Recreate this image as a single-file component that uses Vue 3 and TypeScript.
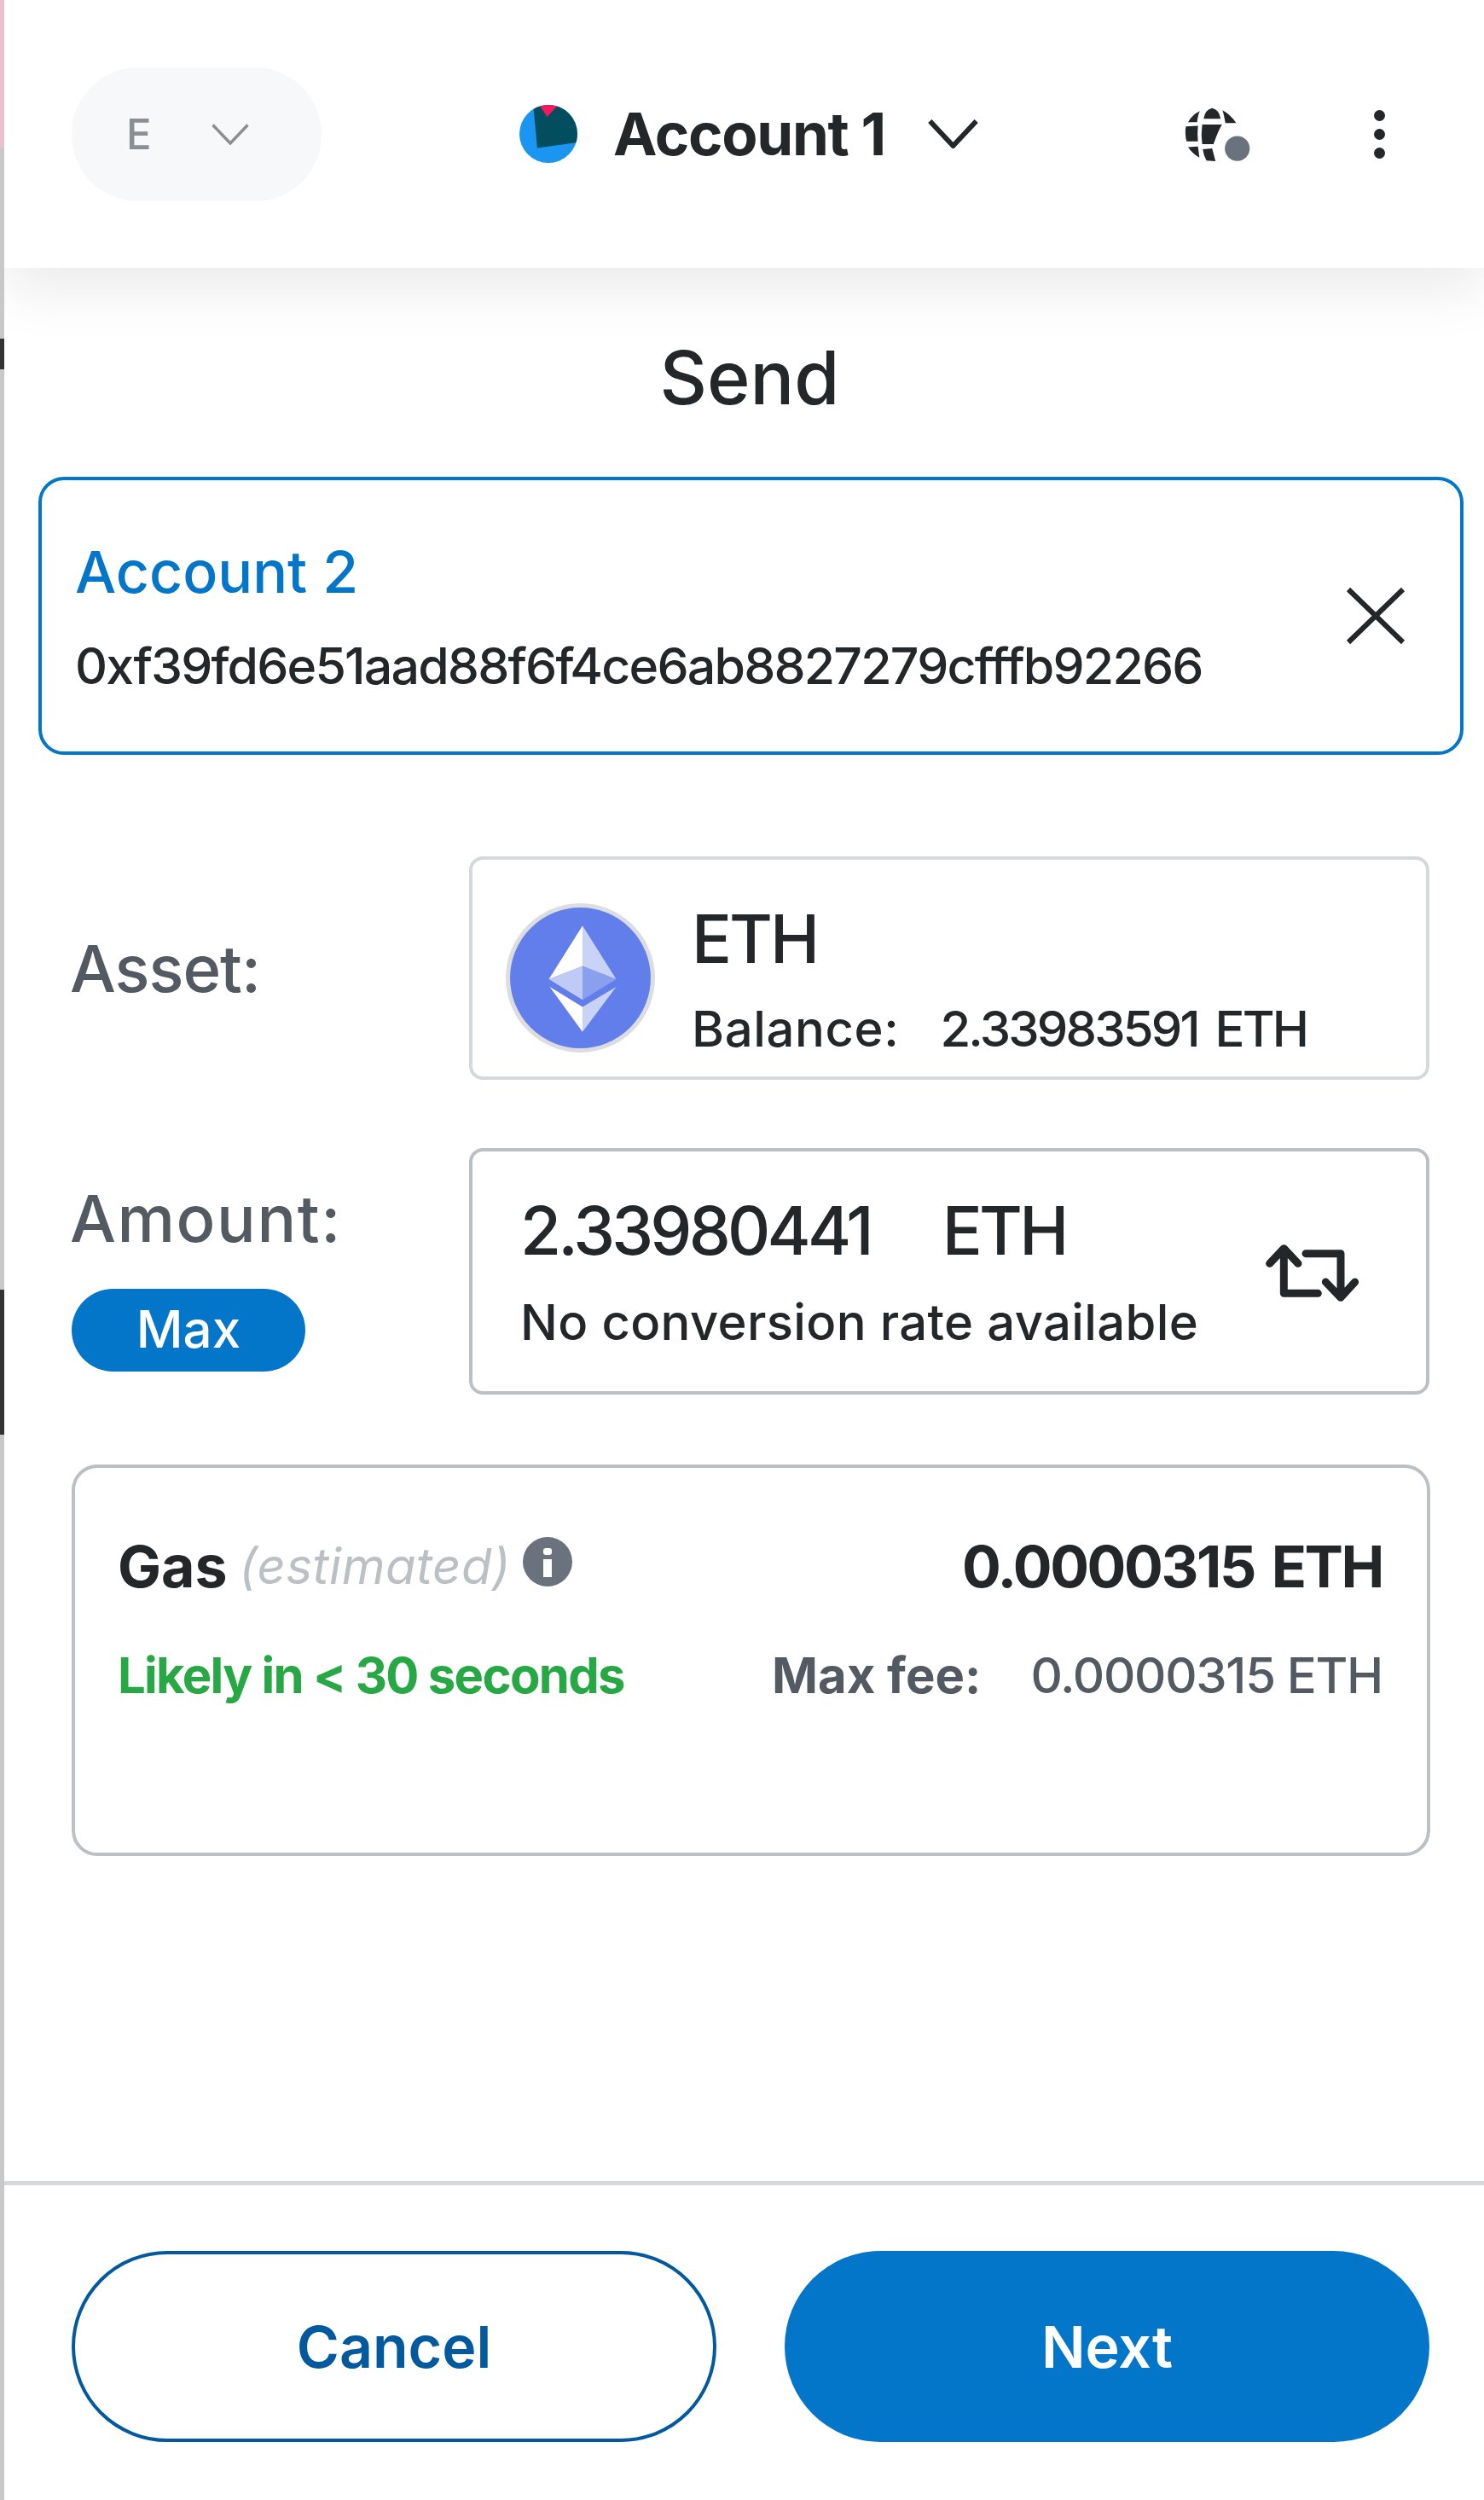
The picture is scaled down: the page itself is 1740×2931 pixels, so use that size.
<script setup lang="ts">
const address = '0xf39fd6e51aad88f6f4ce6ab8827279cfffb92266'
const balance = '2.33983591 ETH'
const gasFee = '0.0000315 ETH'
</script>

<template>
  <div class="page">
    <div class="edge">
      <div class="edge-pink"></div>
      <div class="edge-gray" style="height: 224px"></div>
      <div class="edge-dark" style="height: 36px"></div>
      <div class="edge-gray" style="height: 1079px"></div>
      <div class="edge-dark" style="height: 170px"></div>
      <div class="edge-gray grow"></div>
    </div>

    <main class="main">
      <header class="header">
        <div class="network">
          <span class="network-letter">E</span>
          <svg class="network-chevron" viewBox="0 0 44 25" fill="none">
            <path d="M1.5 1.5 22 23 42.5 1.5" stroke="#8a8f94" stroke-width="3.5" />
          </svg>
        </div>

        <svg class="avatar" viewBox="85 68 205 205">
          <defs>
            <clipPath id="avatar-clip"><circle cx="187.5" cy="170.5" r="102.5" /></clipPath>
          </defs>
          <g clip-path="url(#avatar-clip)">
            <rect x="85" y="68" width="205" height="205" fill="#1a95f0" />
            <polygon points="133,60 148,220 295,200 295,60" fill="#024e5f" />
            <polygon points="150,60 230,60 183,110" fill="#f5185e" />
          </g>
        </svg>
        <span class="account-name">Account 1</span>
        <svg class="account-chevron" viewBox="0 0 60 35" fill="none">
          <path d="M2 2 30 32 58 2" stroke="#24272a" stroke-width="6" stroke-linejoin="round" />
        </svg>

        <svg class="globe" viewBox="85 52 235 196" fill="#24272a">
          <path d="M155 95Q160 62 185 57 210 62 215 95Z" />
          <path d="M100 107Q115 80 142 68 135 80 132 107Z" />
          <path d="M222 65Q250 80 270 110L232 110Q228 85 222 65Z" />
          <path d="M92 122 135 120Q132 150 135 175L95 175Q88 150 92 122Z" />
          <path d="M150 115 220 115Q205 140 190 185L150 185Q145 150 150 115Z" />
          <path d="M100 195 135 193Q138 215 140 232 115 218 100 195Z" />
          <path d="M152 203 185 200Q192 225 197 245L165 243Q155 225 152 203Z" />
          <circle cx="274" cy="200" r="44" fill="#6a737d" />
        </svg>

        <div class="menu-dots">
          <span></span>
          <span></span>
          <span></span>
        </div>
      </header>

      <h1 class="title">Send</h1>

      <section class="recipient">
        <div>
          <div class="recipient-name">Account 2</div>
          <div class="recipient-address">{{ address }}</div>
        </div>
        <svg class="close-icon" viewBox="0 0 70 68" fill="none">
          <path d="M3 3 67 65M67 3 3 65" stroke="#24272a" stroke-width="6" />
        </svg>
      </section>

      <section class="form-row asset-row">
        <div class="label label-asset">Asset:</div>
        <div class="field asset-field">
          <svg class="eth-logo" viewBox="0 0 173 173">
            <circle cx="86.5" cy="86.5" r="84" fill="#627eea" stroke="#dcdde0" stroke-width="5" />
            <polygon points="89,26 50,88 89,73" fill="#ffffff" />
            <polygon points="89,26 128,88 89,73" fill="#c9d3f6" />
            <polygon points="89,73 50,88 89,112" fill="#c0cbf5" />
            <polygon points="89,73 128,88 89,112" fill="#8aa0ee" />
            <polygon points="51,97 89,120 89,149" fill="#ffffff" />
            <polygon points="128,97 89,120 89,149" fill="#c9d3f6" />
          </svg>
          <div class="asset-info">
            <div class="asset-symbol">ETH</div>
            <div class="asset-balance">
              <span class="balance-label">Balance:</span>
              <span class="balance-value">{{ balance }}</span>
            </div>
          </div>
        </div>
      </section>

      <section class="form-row amount-row">
        <div class="amount-label">
          <div class="label label-amount">Amount:</div>
          <button class="max-button">Max</button>
        </div>
        <div class="field amount-field">
          <div>
            <div class="amount-value">
              <span>2.33980441</span>
              <span>ETH</span>
            </div>
            <div class="amount-note">No conversion rate available</div>
          </div>
          <svg class="swap-icon" viewBox="65 102 345 210" fill="none">
            <path
              d="M88 175 138 122 188 175M138 122V280H258M215 140H338V295M285 240 338 295 388 240"
              stroke="#24272a"
              stroke-width="27"
              stroke-linecap="round"
              stroke-linejoin="round"
            />
          </svg>
        </div>
      </section>

      <section class="gas">
        <div class="gas-line gas-top">
          <div class="gas-title">
            <b>Gas</b>
            <i>(estimated)</i>
            <svg class="info-icon" viewBox="0 0 58 58">
              <circle cx="29" cy="29" r="29" fill="#6a737d" />
              <rect x="24" y="13" width="10" height="8" rx="3" fill="#ffffff" />
              <rect x="24" y="26" width="10" height="21" fill="#ffffff" />
            </svg>
          </div>
          <b class="gas-total">{{ gasFee }}</b>
        </div>
        <div class="gas-line gas-bottom">
          <b class="gas-speed">Likely in &lt; 30 seconds</b>
          <div class="gas-max">
            <b>Max fee:</b>
            <span>{{ gasFee }}</span>
          </div>
        </div>
      </section>

      <footer class="footer">
        <button class="btn btn-cancel">Cancel</button>
        <button class="btn btn-next">Next</button>
      </footer>
    </main>
  </div>
</template>

<style>
html,
body {
  margin: 0;
  background: #ffffff;
}
</style>

<style scoped>
.page {
  display: flex;
  width: 1740px;
  height: 2931px;
  background: #ffffff;
  color: #24272a;
  font-family: Inter, 'Liberation Sans', sans-serif;
  font-weight: 450;
  overflow: hidden;
}

.edge {
  display: flex;
  flex-direction: column;
  flex: 0 0 5px;
}
.edge-pink {
  height: 173px;
  background: #e8c3cf;
}
.edge-gray {
  background: #c8c8c8;
}
.edge-dark {
  background: #333333;
}
.grow {
  flex: 1;
}

.main {
  flex: 1;
  display: flex;
  flex-direction: column;
  overflow: hidden;
}

/* header */
.header {
  position: relative;
  z-index: 1;
  display: flex;
  align-items: center;
  flex: 0 0 314px;
  padding: 0 116px 0 79px;
  background: #ffffff;
  box-shadow: 0 30px 60px rgba(0, 0, 0, 0.075);
}
.network {
  display: flex;
  align-items: center;
  width: 293px;
  height: 157px;
  padding-left: 64px;
  box-sizing: border-box;
  border-radius: 78px;
  background: #f7f8f9;
}
.network-letter {
  width: 100px;
  font-size: 49px;
  color: #8a8f94;
}
.network-chevron {
  width: 44px;
  height: 25px;
}
.avatar {
  width: 68px;
  height: 68px;
  margin-left: 232px;
}
.account-name {
  margin-left: 42px;
  font-size: 69px;
  font-weight: 700;
  letter-spacing: -1.3px;
}
.account-chevron {
  width: 59px;
  height: 34px;
  margin-left: 50px;
}
.globe {
  width: 78px;
  height: 65px;
  margin-left: auto;
}
.menu-dots {
  display: flex;
  flex-direction: column;
  gap: 9px;
  margin-left: 145px;
}
.menu-dots span {
  width: 13px;
  height: 13px;
  border-radius: 50%;
  background: #24272a;
}

.title {
  margin: 79px 0 0;
  padding-left: 13px;
  font-size: 86px;
  font-weight: 450;
  line-height: 100px;
  text-align: center;
}

/* recipient */
.recipient {
  display: flex;
  align-items: center;
  justify-content: space-between;
  width: 1671px;
  height: 326px;
  margin: 66px 0 0 40px;
  padding: 0 64px 0 39px;
  box-sizing: border-box;
  border: 4px solid #0376c9;
  border-radius: 30px;
}
.recipient-name {
  font-size: 68px;
  line-height: 84px;
  color: #0376c9;
}
.recipient-address {
  margin-top: 33px;
  font-size: 59px;
  line-height: 72px;
  letter-spacing: -1.8px;
}
.close-icon {
  width: 70px;
  height: 68px;
}

/* asset + amount */
.form-row {
  display: grid;
  grid-template-columns: 466px 1126px;
  margin-left: 79px;
}
.asset-row {
  align-items: center;
  margin-top: 119px;
}
.amount-row {
  margin-top: 80px;
}
.label {
  font-size: 76px;
  line-height: 92px;
  color: #535a61;
}
.label-asset {
  margin-left: -2px;
  letter-spacing: -1px;
}
.label-amount {
  margin-left: -2px;
  letter-spacing: 1.6px;
}
.field {
  display: flex;
  align-items: center;
  box-sizing: border-box;
  border: 4px solid #d6d9dc;
  border-radius: 16px;
}
.asset-field {
  height: 262px;
  padding-left: 39px;
}
.eth-logo {
  width: 175px;
  height: 175px;
  margin: 22px 43px 0 0;
}
.asset-info {
  margin-top: 26px;
}
.asset-symbol {
  font-size: 78px;
  line-height: 92px;
  letter-spacing: -3px;
}
.asset-balance {
  display: flex;
  gap: 48px;
  margin-top: 24px;
  font-size: 58px;
  line-height: 70px;
}
.balance-label {
  letter-spacing: 0.6px;
}
.balance-value {
  letter-spacing: -2.8px;
  word-spacing: 7px;
}
.amount-label {
  padding-top: 36px;
}
.max-button {
  display: block;
  width: 274px;
  height: 97px;
  margin-top: 37px;
  padding: 0 0 4px;
  border: 0;
  border-radius: 49px;
  background: #0376c9;
  color: #ffffff;
  font: inherit;
  font-size: 60px;
}
.amount-field {
  justify-content: space-between;
  height: 289px;
  padding: 0 76px 0 56px;
  border-color: #bbc0c5;
}
.amount-value {
  display: flex;
  gap: 84px;
  font-size: 78px;
  line-height: 92px;
  letter-spacing: -3.8px;
}
.amount-note {
  margin-top: 26px;
  font-size: 58px;
  line-height: 70px;
  letter-spacing: 0.35px;
}
.swap-icon {
  width: 115px;
  height: 70px;
  margin-top: 2px;
}

/* gas */
.gas {
  width: 1593px;
  height: 459px;
  margin: 82px 0 0 79px;
  padding: 0 52px 0 50px;
  box-sizing: border-box;
  border: 4px solid #bbc0c5;
  border-radius: 30px;
}
.gas-line {
  display: flex;
  align-items: center;
  justify-content: space-between;
}
.gas-top {
  margin-top: 74px;
}
.gas-bottom {
  margin-top: 52px;
}
.gas-title {
  display: flex;
  align-items: center;
  gap: 14px;
}
.gas-title b {
  font-size: 68px;
}
.gas-title i {
  font-size: 58px;
  letter-spacing: 0.5px;
  color: #bbc0c5;
}
.info-icon {
  width: 58px;
  height: 58px;
  margin: -10px 0 0;
}
.gas-total {
  font-size: 68px;
  letter-spacing: -2.4px;
  word-spacing: 6px;
}
.gas-speed {
  font-size: 58px;
  letter-spacing: -1.7px;
  color: #28a745;
}
.gas-max {
  display: flex;
  gap: 58px;
  font-size: 58px;
  letter-spacing: -1.3px;
  color: #535a61;
}
.gas-max b {
  letter-spacing: 0;
}

/* footer */
.footer {
  display: grid;
  grid-template-columns: 756px 756px;
  gap: 80px;
  height: 374px;
  margin-top: auto;
  padding: 77px 0 0 79px;
  box-sizing: border-box;
  border-top: 5px solid #d6d9dc;
}
.btn {
  height: 224px;
  padding: 0;
  border-radius: 112px;
  font: inherit;
  font-size: 68px;
  font-weight: 600;
}
.btn-cancel {
  border: 4px solid #03599e;
  background: #ffffff;
  color: #03599e;
}
.btn-next {
  border: 0;
  background: #0376c9;
  color: #ffffff;
}
</style>
